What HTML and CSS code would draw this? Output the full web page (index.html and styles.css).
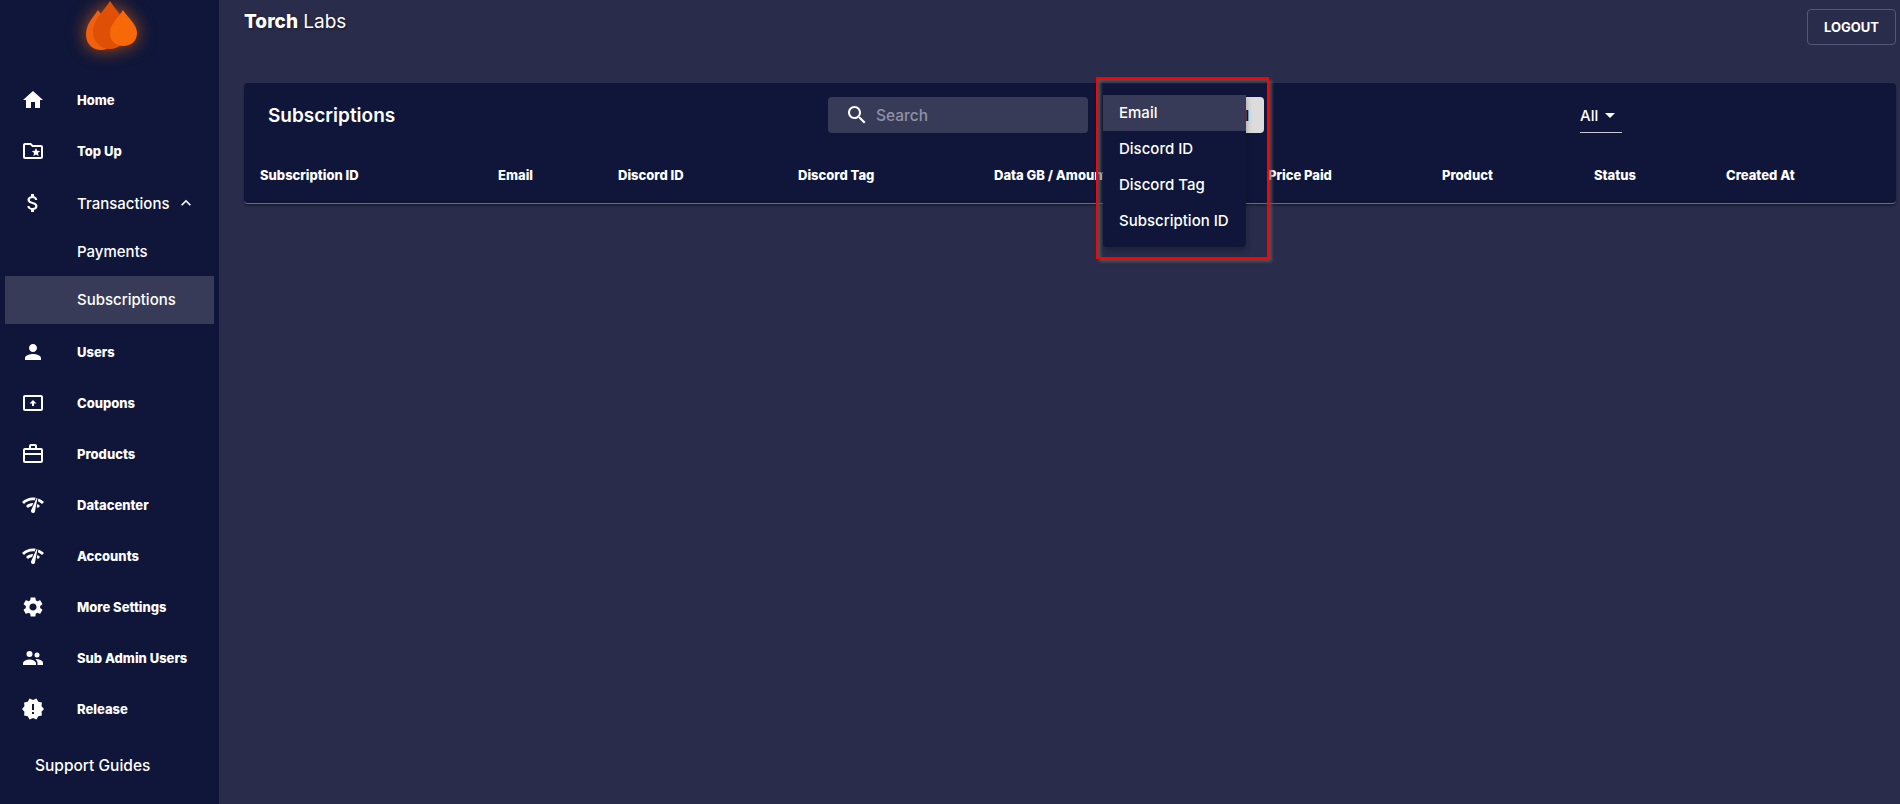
FILE: index.html
```html
<!DOCTYPE html>
<html lang="en">
<head>
  <meta charset="UTF-8" />
  <title>Torch Labs</title>
  <link rel="stylesheet" href="styles.css">
</head>
<body>
  <div class="shell">
    <aside class="sidebar">
      <div class="logo">
        <svg width="80" height="74" viewBox="0 0 80 74">
          <path fill="#f0600f" d="M28 10C22 19 16 24 16 35c0 9 7 15 15 15s15-6 15-15c0-11-12-16-18-25z"/>
          <path fill="#e04f06" d="M40 1C33 12 23 20 23 32c0 10 8 17 17 17s17-7 17-17C57 20 47 12 40 1z"/>
          <path fill="#f76808" d="M53 10c-5 8-13 14-13 23 0 8 6 13 13.500 13S67 41 67 33c0-9-9-15-14-23z"/>
        </svg>
      </div>
      <nav class="nav">
        <a class="nav-item">
          <svg class="nav-icon" viewBox="0 0 24 24"><path d="M10 20v-6h4v6h5v-8h3L12 3 2 12h3v8z"/></svg>
          <span>Home</span>
        </a>
        <a class="nav-item">
          <svg class="nav-icon" viewBox="0 0 24 24"><path d="M20 6h-8l-2-2H4c-1.100 0-1.990.9-1.990 2L2 18c0 1.100.9 2 2 2h16c1.100 0 2-.9 2-2V8c0-1.100-.9-2-2-2zm0 12H4V6h5.170l2 2H20v10zm-6.920-3.960L12.390 17 15 15.470 17.610 17l-.69-2.960 2.300-1.990-3.030-.26L15 9l-1.190 2.790-3.030.26z"/></svg>
          <span>Top Up</span>
        </a>
        <a class="nav-item nav-parent">
          <svg class="nav-icon" viewBox="0 0 24 24"><path d="M11.800 10.900c-2.270-.59-3-1.200-3-2.150 0-1.090 1.010-1.850 2.700-1.850 1.780 0 2.440.85 2.500 2.100h2.210c-.07-1.720-1.120-3.300-3.210-3.810V3h-3v2.160c-1.940.42-3.500 1.680-3.500 3.610 0 2.310 1.910 3.460 4.700 4.130 2.500.6 3 1.480 3 2.410 0 .69-.49 1.790-2.700 1.790-2.060 0-2.870-.92-2.980-2.100h-2.200c.12 2.190 1.760 3.420 3.680 3.830V21h3v-2.150c1.950-.37 3.500-1.500 3.500-3.550 0-2.840-2.430-3.810-4.700-4.400z"/></svg>
          <span>Transactions</span>
          <svg class="nav-caret" viewBox="0 0 24 24"><path d="M12 8l-6 6 1.410 1.410L12 10.830l4.590 4.580L18 14z"/></svg>
        </a>
        <a class="nav-sub">Payments</a>
        <a class="nav-sub active">Subscriptions</a>
        <a class="nav-item nav-after-sub">
          <svg class="nav-icon" viewBox="0 0 24 24"><path d="M12 12c2.210 0 4-1.790 4-4s-1.790-4-4-4-4 1.790-4 4 1.790 4 4 4zm0 2c-2.670 0-8 1.340-8 4v2h16v-2c0-2.660-5.330-4-8-4z"/></svg>
          <span>Users</span>
        </a>
        <a class="nav-item">
          <svg class="nav-icon" viewBox="0 0 24 24"><path d="M20 4H4c-1.100 0-2 .9-2 2v12c0 1.100.9 2 2 2h16c1.100 0 2-.9 2-2V6c0-1.100-.9-2-2-2zm0 14H4V6h16v12zM12 9l-3.500 3.500H11V15h2v-2.500h2.500z"/></svg>
          <span>Coupons</span>
        </a>
        <a class="nav-item">
          <svg class="nav-icon" viewBox="0 0 24 24"><path d="M14 6V4h-4v2h4zM4 8v3h16V8H4zm0 5v6h16v-6H4zm16-7c1.110 0 2 .89 2 2v11c0 1.110-.89 2-2 2H4c-1.110 0-2-.89-2-2l.01-11c0-1.110.88-2 1.990-2h4V4c0-1.110.89-2 2-2h4c1.110 0 2 .89 2 2v2h4z"/></svg>
          <span>Products</span>
        </a>
        <a class="nav-item">
          <svg class="nav-icon" viewBox="0 0 24 24"><path d="M15.900 5c-.17 0-.32.09-.41.23l-.07.15-5.180 11.650c-.16.29-.26.61-.26.96 0 1.110.9 2.010 2.010 2.010.96 0 1.770-.68 1.960-1.590l.01-.03L16.400 5.500c0-.28-.22-.5-.5-.5zM1 9l2 2c2.880-2.880 6.790-4.060 10.530-3.560l1.200-2.700C9.890 3.820 4.740 5.260 1 9zm20 2l2-2c-1.640-1.640-3.550-2.820-5.590-3.570l-.53 2.820c1.500.62 2.900 1.530 4.120 2.750zm-4 4l2-2c-.8-.8-1.700-1.420-2.660-1.890l-.55 2.920c.42.27.83.59 1.210.97zM5 13l2 2c1.130-1.130 2.560-1.790 4.030-2l1.280-2.880c-2.630-.08-5.300.87-7.310 2.880z"/></svg>
          <span>Datacenter</span>
        </a>
        <a class="nav-item">
          <svg class="nav-icon" viewBox="0 0 24 24"><path d="M15.900 5c-.17 0-.32.09-.41.23l-.07.15-5.180 11.650c-.16.29-.26.61-.26.96 0 1.110.9 2.010 2.010 2.010.96 0 1.770-.68 1.960-1.590l.01-.03L16.400 5.500c0-.28-.22-.5-.5-.5zM1 9l2 2c2.880-2.880 6.790-4.060 10.530-3.560l1.200-2.700C9.890 3.820 4.740 5.260 1 9zm20 2l2-2c-1.640-1.640-3.550-2.820-5.590-3.570l-.53 2.820c1.500.62 2.900 1.530 4.120 2.750zm-4 4l2-2c-.8-.8-1.700-1.420-2.660-1.890l-.55 2.920c.42.27.83.59 1.210.97zM5 13l2 2c1.130-1.130 2.560-1.790 4.030-2l1.280-2.880c-2.630-.08-5.300.87-7.310 2.880z"/></svg>
          <span>Accounts</span>
        </a>
        <a class="nav-item">
          <svg class="nav-icon" viewBox="0 0 24 24"><path d="M19.140 12.940c.04-.3.06-.61.06-.94 0-.32-.02-.64-.07-.94l2.030-1.580c.18-.14.23-.41.12-.61l-1.920-3.320c-.12-.22-.37-.29-.59-.22l-2.390.96c-.5-.38-1.030-.7-1.620-.94l-.36-2.540c-.04-.24-.24-.41-.48-.41h-3.840c-.24 0-.43.17-.47.41l-.36 2.540c-.59.24-1.130.57-1.620.94l-2.390-.96c-.22-.08-.47 0-.59.22L2.740 8.870c-.12.21-.08.47.12.61l2.030 1.580c-.05.3-.09.63-.09.94s.02.64.07.94l-2.030 1.580c-.18.14-.23.41-.12.61l1.920 3.320c.12.22.37.29.59.22l2.390-.96c.5.38 1.030.7 1.620.94l.36 2.540c.05.24.24.41.48.41h3.840c.24 0 .44-.17.47-.41l.36-2.540c.59-.24 1.130-.56 1.620-.94l2.390.96c.22.08.47 0 .59-.22l1.920-3.320c.12-.22.07-.47-.12-.61l-2.010-1.580zM12 15.600c-1.980 0-3.600-1.620-3.600-3.600s1.620-3.600 3.600-3.600 3.600 1.620 3.600 3.600-1.620 3.600-3.600 3.600z"/></svg>
          <span>More Settings</span>
        </a>
        <a class="nav-item">
          <svg class="nav-icon" viewBox="0 0 24 24"><circle cx="8.500" cy="8" r="3"/><circle cx="16" cy="9" r="2.500"/><path d="M2 19v-1.700c0-2.300 4.300-3.800 6.500-3.800s6.500 1.500 6.500 3.800V19zM14.500 13c3 0 7.500 1.200 7.500 3.800V19h-5.500v-1.700c0-1.800-.8-3.200-2-4.300z"/></svg>
          <span>Sub Admin Users</span>
        </a>
        <a class="nav-item">
          <svg class="nav-icon" viewBox="0 0 24 24"><path d="M23 12l-2.440-2.780.34-3.680-3.610-.82-1.890-3.180L12 3 8.600 1.540 6.710 4.720l-3.610.81.34 3.680L1 12l2.440 2.780-.34 3.690 3.610.82 1.890 3.180L12 21l3.400 1.460 1.890-3.180 3.610-.82-.34-3.680L23 12zm-10 5h-2v-2h2v2zm0-4h-2V7h2v6z"/></svg>
          <span>Release</span>
        </a>
      </nav>
      <a class="support">Support Guides</a>
    </aside>

    <main class="main">
      <header class="topbar">
        <div class="brand"><b>Torch</b> Labs</div>
        <button class="logout">LOGOUT</button>
      </header>

      <section class="card">
        <div class="toolbar">
          <h2 class="card-title">Subscriptions</h2>
          <div class="search">
            <svg class="search-icon" viewBox="0 0 24 24"><path d="M15.500 14h-.79l-.28-.27C15.410 12.590 16 11.110 16 9.500 16 5.910 13.090 3 9.500 3S3 5.910 3 9.500 5.910 16 9.500 16c1.610 0 3.090-.59 4.230-1.570l.27.28v.79l5 4.990L20.490 19l-4.990-5zm-6 0C7.010 14 5 11.990 5 9.500S7.010 5 9.500 5 14 7.010 14 9.500 11.990 14 9.500 14z"/></svg>
            <span>Search</span>
          </div>
          <div class="filter">
            <button class="filter-btn">Email</button>
            <ul class="menu">
              <li class="selected">Email</li>
              <li>Discord ID</li>
              <li>Discord Tag</li>
              <li>Subscription ID</li>
            </ul>
            <div class="highlight"></div>
          </div>
          <div class="status-select">
            <span>All</span>
            <svg class="status-caret" viewBox="0 0 10 5"><path d="M0 0l5 5 5-5z"/></svg>
          </div>
        </div>
        <div class="table-head">
          <div>Subscription ID</div>
          <div>Email</div>
          <div>Discord ID</div>
          <div>Discord Tag</div>
          <div>Data GB / Amount</div>
          <div>Price Paid</div>
          <div>Product</div>
          <div>Status</div>
          <div>Created At</div>
        </div>
      </section>
    </main>
  </div>
</body>
</html>
```

FILE: styles.css
```css
* {
  box-sizing: border-box;
}

html, body {
  height: 100%;
}

body {
  margin: 0;
  font-family: Inter, "Noto Sans", sans-serif;
  background: #292c4a;
  color: #fff;
  overflow: hidden;
}

.shell {
  display: flex;
  height: 100%;
}

/* sidebar */
.sidebar {
  width: 219px;
  flex-shrink: 0;
  background: #0f1639;
}

.logo {
  height: 74px;
  display: flex;
  justify-content: center;
}

.logo svg {
  filter: drop-shadow(0 0 9px rgba(247, 104, 8, 0.7));
}

.nav-item {
  height: 51px;
  margin: 0 5px;
  padding-left: 16px;
  display: flex;
  align-items: center;
  font-size: 13px;
  font-weight: 800;
}

.nav-after-sub {
  margin-top: 2px;
}

.nav-icon {
  width: 24px;
  height: 24px;
  margin-right: 32px;
  fill: #fff;
  flex-shrink: 0;
}

.nav-parent {
  height: 52px;
  padding-top: 2px;
  font-size: 15px;
  font-weight: 500;
}

.nav-caret {
  width: 20px;
  height: 20px;
  margin-left: 6px;
  fill: #fff;
}

.nav-sub {
  display: block;
  height: 48px;
  line-height: 48px;
  margin: 0 5px;
  padding-left: 72px;
  font-size: 15px;
  font-weight: 500;
}

.nav-sub.active {
  background: #383b58;
}

.support {
  display: block;
  margin-top: 22px;
  padding-left: 35px;
  font-size: 15.500px;
  font-weight: 500;
}

/* main */
.main {
  flex: 1;
  min-width: 0;
  padding: 0 4px 0 25px;
}

.topbar {
  height: 83px;
  display: flex;
  justify-content: space-between;
  align-items: flex-start;
}

.brand {
  margin-top: 11px;
  font-size: 19px;
  line-height: 22px;
  text-shadow: 1px 1px 3px rgba(0, 0, 0, 0.5);
}

.brand b {
  font-weight: 800;
}

.logout {
  margin-top: 9px;
  width: 89px;
  height: 36px;
  background: transparent;
  border: 1px solid #55587a;
  border-radius: 4px;
  color: #fff;
  font-family: inherit;
  font-size: 13px;
  font-weight: 700;
}

.card {
  height: 121px;
  background: #0f1639;
  border-radius: 4px;
  border-bottom: 1px solid #6b6d72;
  box-shadow: 0 2px 2px rgba(0, 0, 0, 0.3);
}

.toolbar {
  height: 64px;
  display: grid;
  grid-template-columns: 584px 260px 176px 1fr;
  align-items: center;
}

.card-title {
  margin: 0 0 0 24px;
  font-size: 19px;
  font-weight: 600;
}

.search {
  height: 36px;
  background: #383b58;
  border-radius: 4px;
  display: flex;
  align-items: center;
  padding-left: 17px;
  font-size: 15.500px;
  font-weight: 500;
  color: #8f91a6;
}

.search-icon {
  width: 24px;
  height: 24px;
  margin-right: 7px;
  fill: #fff;
}

.filter {
  position: relative;
  margin-left: 12px;
  height: 36px;
}

.filter-btn {
  display: block;
  width: 161px;
  height: 36px;
  margin-left: 3px;
  border: 0;
  border-radius: 4px;
  background: #dcdcdc;
  color: #0f1639;
  text-align: right;
  padding: 0 15px 0 0;
  font-family: inherit;
  font-size: 14px;
  font-weight: 700;
}

.menu {
  position: absolute;
  left: 3px;
  top: -2px;
  width: 143px;
  margin: 0;
  padding: 0 0 8px;
  list-style: none;
  background: #0f1639;
  border-radius: 0 0 4px 4px;
  box-shadow: 0 3px 6px rgba(0, 0, 0, 0.3);
  font-size: 15px;
  font-weight: 500;
}

.menu li {
  height: 36px;
  line-height: 35px;
  padding-left: 16px;
}

.menu li.selected {
  background: #383b58;
}

.highlight {
  position: absolute;
  left: -4px;
  top: -20px;
  width: 173px;
  height: 182px;
  border: 2px solid #f00;
  box-shadow: 3px 3px 3px rgba(90, 90, 90, 0.8), inset 3px 3px 3px rgba(90, 90, 90, 0.8);
  pointer-events: none;
}

.status-select {
  width: 42px;
  height: 35px;
  margin: 1px 0 0 316px;
  border-bottom: 1px solid #c8c9d2;
  display: flex;
  align-items: center;
  font-size: 15px;
  font-weight: 500;
}

.status-caret {
  width: 10px;
  height: 5px;
  margin-left: 7px;
  fill: #fff;
}

.table-head {
  display: grid;
  grid-template-columns: 238px 120px 180px 196px 274px 174px 152px 132px 1fr;
  padding: 20px 0 0 16px;
  font-size: 13px;
  font-weight: 800;
  line-height: 16px;
}
```
